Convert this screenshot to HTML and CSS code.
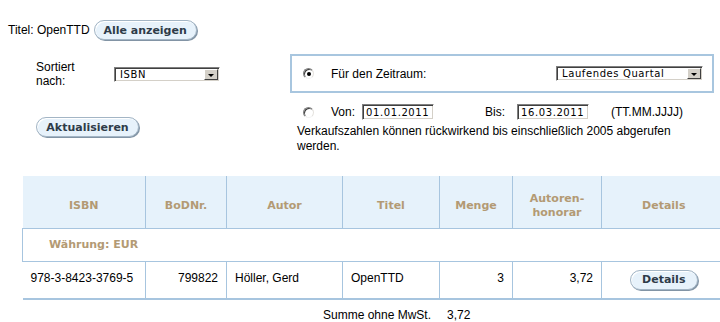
FILE: index.html
```html
<!DOCTYPE html>
<html>

<head>
	<meta charset="utf-8">
	<title>Verkaufszahlen</title>
	<link rel="stylesheet" href="styles.css">
</head>

<body>

	<div class="page">
		<div class="title-row">
			<span>Titel: OpenTTD</span>
			<span class="btn btn-wide">Alle anzeigen</span>
		</div>

		<div class="filters">
			<div class="left-col">
				<div class="sort-row">
					<span class="sort-label">Sortiert nach:</span>
					<div class="select select-sort">
						<span class="select-value">ISBN</span>
						<span class="select-arrow"><i></i></span>
					</div>
				</div>
				<span class="btn btn-wide btn-update">Aktualisieren</span>
			</div>

			<div class="right-col">
				<div class="period-box">
					<span class="radio checked"></span>
					<span class="period-label">Für den Zeitraum:</span>
					<div class="select select-period">
						<span class="select-value">Laufendes Quartal</span>
						<span class="select-arrow"><i></i></span>
					</div>
				</div>

				<div class="range-row">
					<span class="radio"></span>
					<span class="range-label">Von:</span>
					<span class="date-input">01.01.2011</span>
					<span class="range-label range-bis">Bis:</span>
					<span class="date-input">16.03.2011</span>
					<span class="range-hint">(TT.MM.JJJJ)</span>
				</div>

				<p class="note">Verkaufszahlen können rückwirkend bis einschließlich 2005 abgerufen werden.</p>
			</div>
		</div>

		<table class="sales">
			<colgroup>
				<col style="width: 123px">
				<col style="width: 81px">
				<col style="width: 116px">
				<col style="width: 97px">
				<col style="width: 73px">
				<col style="width: 89px">
				<col style="width: 124px">
			</colgroup>
			<tr class="head">
				<th>ISBN</th>
				<th>BoDNr.</th>
				<th>Autor</th>
				<th>Titel</th>
				<th>Menge</th>
				<th>Autoren-<br>honorar</th>
				<th>Details</th>
			</tr>
			<tr class="currency">
				<td colspan="7">Währung: EUR</td>
			</tr>
			<tr class="item">
				<td>978-3-8423-3769-5</td>
				<td class="num">799822</td>
				<td>Höller, Gerd</td>
				<td>OpenTTD</td>
				<td class="num">3</td>
				<td class="num">3,72</td>
				<td class="center"><span class="btn btn-small">Details</span></td>
			</tr>
		</table>

		<div class="sum-row">
			<span class="sum-label">Summe ohne MwSt.</span>
			<span>3,72</span>
		</div>
	</div>

</body>

</html>
```

FILE: styles.css
```css
* {
	padding: 0px;
	margin: 0px;
	box-sizing: border-box;
}

html,
body {
	width: 720px;
	height: 322px;
	overflow: hidden;
}

body {
	font-family: "Liberation Sans", Arial, sans-serif;
	font-size: 12px;
	color: #000;
	background: #fff;
}

.page {
	width: 740px;
}

/* Knoepfe */
.btn {
	display: inline-flex;
	align-items: center;
	justify-content: center;
	height: 20px;
	font-family: "DejaVu Sans", Verdana, sans-serif;
	font-weight: bold;
	font-size: 11px;
	color: #2e3b49;
	background: #e7f2fb;
	border: 1px solid #a3b5c5;
	border-radius: 10px;
	box-shadow: 1px 1px 0 #8294a5, inset 1px 1px 0 #fff;
}

.btn-wide {
	width: 103px;
}

.btn-small {
	width: 68px;
}

/* Kopfzeile */
.title-row {
	display: flex;
	align-items: center;
	gap: 4px;
	padding: 20px 0 0 8px;
}

/* Filter */
.filters {
	display: flex;
	margin-top: 14px;
}

.left-col {
	width: 290px;
	padding: 6px 0 0 36px;
}

.sort-row {
	display: flex;
	align-items: center;
}

.sort-label {
	width: 78px;
	line-height: 14px;
	padding-right: 20px;
}

.btn-update {
	margin-top: 29px;
}

.right-col {
	width: 424px;
}

.period-box {
	display: flex;
	align-items: center;
	height: 39px;
	border: 2px solid #a8c6df;
	padding: 0 9px 0 11px;
}

.period-label {
	margin-left: 17px;
	flex: 1;
}

/* Auswahlfelder */
.select {
	display: flex;
	align-items: stretch;
	height: 15px;
	background: #fff;
	border: 1px solid;
	border-color: #808080 #fff #fff #808080;
	box-shadow: inset 1px 1px 0 #404040, inset -1px -1px 0 #d4d0c8;
	padding: 1px;
}

.select-sort {
	width: 106px;
}

.select-period {
	width: 147px;
}

.select-value {
	flex: 1;
	font-family: "DejaVu Sans", Verdana, sans-serif;
	font-size: 10px;
	letter-spacing: 0.6px;
	line-height: 11px;
	padding-left: 4px;
}

.select-arrow {
	width: 14px;
	background: #d4d0c8;
	border: 1px solid;
	border-color: #fff #404040 #404040 #fff;
	display: flex;
	align-items: center;
	justify-content: center;
}

.select-arrow i {
	display: block;
	width: 0;
	height: 0;
	margin-top: 2px;
	border-left: 3px solid transparent;
	border-right: 3px solid transparent;
	border-top: 3px solid #000;
}

/* Radios */
.radio {
	position: relative;
	display: inline-block;
	width: 11px;
	height: 11px;
	border-radius: 50%;
	border: 1px solid;
	border-color: #808080 #e4e2de #f4f4f4 #808080;
	background: #fff;
	box-shadow: inset 1px 1px 0 #404040;
}

.radio.checked::after {
	content: "";
	position: absolute;
	left: 3px;
	top: 3px;
	width: 4px;
	height: 4px;
	border-radius: 50%;
	background: #000;
}

.range-row {
	display: flex;
	align-items: center;
	margin-top: 11px;
	padding-left: 13px;
	height: 16px;
}

.range-label {
	width: 31px;
	margin-left: 17px;
}

.range-bis {
	width: 32px;
	margin-left: 51px;
}

.date-input {
	display: flex;
	align-items: center;
	width: 72px;
	height: 16px;
	background: #fff;
	border: 1px solid;
	border-color: #808080 #fff #fff #808080;
	box-shadow: inset 1px 1px 0 #404040, inset -1px -1px 0 #d4d0c8;
	font-family: "DejaVu Sans", Verdana, sans-serif;
	font-size: 10px;
	letter-spacing: 0.6px;
	padding-left: 3px;
}

.range-hint {
	margin-left: 22px;
}

.note {
	margin-top: 4px;
	padding-left: 7px;
	line-height: 15px;
	width: 400px;
}

/* Tabelle */
.sales {
	margin: 22px 0 0 22px;
	border-collapse: collapse;
	table-layout: fixed;
	width: 703px;
}

.sales th {
	height: 52px;
	padding: 9px 2px 0;
	background: #e6f2fb;
	color: #b39a74;
	font-family: "DejaVu Sans", Verdana, sans-serif;
	font-size: 11px;
	line-height: 14px;
	border-right: 1px solid #a7c5df;
	border-bottom: 1px solid #a7c5df;
}

.sales th:last-child {
	border-right: none;
}

.currency td {
	height: 33px;
	padding: 0 0 0 26px;
	border: 1px solid #a7c5df;
	border-right: none;
	color: #b39a74;
	font-family: "DejaVu Sans", Verdana, sans-serif;
	font-weight: bold;
	font-size: 11px;
}

.item td {
	height: 38px;
	padding: 0 8px;
	border-right: 1px solid #a7c5df;
	border-bottom: 2px solid #a7c5df;
	padding-bottom: 4px;
}

.item td:last-child {
	border-right: none;
}

.item td.num {
	text-align: right;
}

.item td.center {
	text-align: center;
	padding-bottom: 0;
}

.sum-row {
	display: flex;
	gap: 16px;
	padding: 8px 0 0 323px;
}
```
